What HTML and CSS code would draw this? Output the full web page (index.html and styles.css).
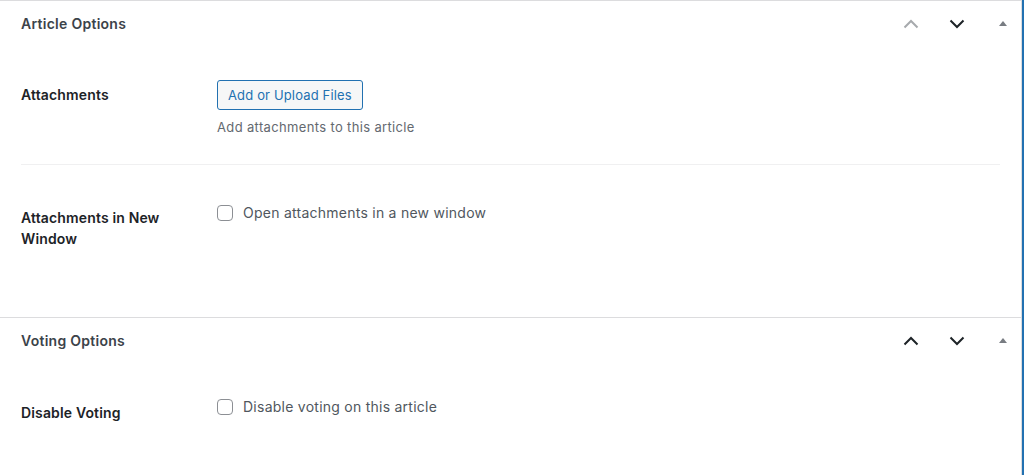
FILE: index.html
```html
<!DOCTYPE html>
<html>
<head>
<meta charset="utf-8">
<link rel="stylesheet" href="styles.css">
</head>
<body>
<div class="page">
  <div class="panel">
    <section class="box">
      <div class="box-header">
        <h2 class="box-title">Article Options</h2>
        <div class="box-actions">
          <button class="icon-btn is-disabled" aria-label="Move up">
            <svg width="16" height="10" viewBox="0 0 16 10"><path d="M1.5 8.5 L8 2 L14.5 8.5" fill="none" stroke="currentColor" stroke-width="2"/></svg>
          </button>
          <button class="icon-btn" aria-label="Move down">
            <svg width="16" height="10" viewBox="0 0 16 10"><path d="M1.5 1.5 L8 8 L14.5 1.5" fill="none" stroke="currentColor" stroke-width="2"/></svg>
          </button>
          <button class="icon-btn toggle" aria-label="Toggle panel">
            <svg width="8" height="5" viewBox="0 0 8 5"><polygon points="0,5 4,0 8,5" fill="currentColor"/></svg>
          </button>
        </div>
      </div>
      <div class="box-body">
        <div class="row row-first">
          <div class="row-label">Attachments</div>
          <div class="row-field">
            <button class="btn-secondary">Add or Upload Files</button>
            <p class="description">Add attachments to this article</p>
          </div>
        </div>
        <div class="row row-second">
          <div class="row-label">Attachments in New Window</div>
          <div class="row-field">
            <label class="check"><span class="checkbox"></span>Open attachments in a new window</label>
          </div>
        </div>
      </div>
    </section>
    <section class="box">
      <div class="box-header">
        <h2 class="box-title">Voting Options</h2>
        <div class="box-actions">
          <button class="icon-btn" aria-label="Move up">
            <svg width="16" height="10" viewBox="0 0 16 10"><path d="M1.5 8.5 L8 2 L14.5 8.5" fill="none" stroke="currentColor" stroke-width="2"/></svg>
          </button>
          <button class="icon-btn" aria-label="Move down">
            <svg width="16" height="10" viewBox="0 0 16 10"><path d="M1.5 1.5 L8 8 L14.5 1.5" fill="none" stroke="currentColor" stroke-width="2"/></svg>
          </button>
          <button class="icon-btn toggle" aria-label="Toggle panel">
            <svg width="8" height="5" viewBox="0 0 8 5"><polygon points="0,5 4,0 8,5" fill="currentColor"/></svg>
          </button>
        </div>
      </div>
      <div class="box-body">
        <div class="row">
          <div class="row-label">Disable Voting</div>
          <div class="row-field">
            <label class="check"><span class="checkbox"></span>Disable voting on this article</label>
          </div>
        </div>
      </div>
    </section>
  </div>
  <div class="edge"></div>
</div>
</body>
</html>
```

FILE: styles.css
```css
* { box-sizing: border-box; }
html, body { margin: 0; padding: 0; height: 100%; }
body {
  font-family: Inter, "Open Sans", "Liberation Sans", sans-serif;
  background: #fff;
  color: #1d2327;
  overflow: hidden;
}
.page {
  display: flex;
  height: 475px;
}
.panel {
  flex: 1;
  border-right: 1px solid #dcdcde;
  background: #fff;
}
.edge {
  width: 2px;
  background: #2271b1;
}
.box {
  border-top: 1px solid #dcdcde;
}
.box-header {
  height: 45px;
  display: flex;
  align-items: center;
  justify-content: space-between;
  padding-left: 21px;
}
.box-title {
  margin: 0;
  font-size: 14px;
  font-weight: 600;
  color: #3c434a;
  line-height: 20px;
  letter-spacing: 0.27px;
}
.box-actions {
  display: flex;
  gap: 10px;
  height: 100%;
}
.icon-btn {
  width: 36px;
  height: 100%;
  padding: 0;
  border: 0;
  background: transparent;
  color: #1d2327;
  display: flex;
  align-items: center;
  justify-content: center;
}
.icon-btn.is-disabled { color: #a7aaad; }
.icon-btn.toggle { color: #787c82; }
.box-body {
  padding: 0 21px;
}
.row {
  display: grid;
  grid-template-columns: 196px 1fr;
}
.row-label {
  padding: 39px 24px 0 0;
  font-size: 14px;
  font-weight: 600;
  line-height: 21px;
  color: #1d2327;
  letter-spacing: 0.15px;
}
.row-first .row-label {
  padding-top: 38px;
}
.row-field {
  padding-top: 34px;
  font-size: 14px;
  line-height: 20px;
}
.row-first {
  border-bottom: 1px solid #f0f0f1;
  padding-bottom: 27px;
}
.row-second .row-label {
  padding-top: 42px;
  padding-bottom: 68px;
}
.row-second .row-field {
  padding-top: 38px;
}
.btn-secondary {
  display: block;
  height: 30px;
  padding: 0 10px;
  border: 1px solid #2271b1;
  border-radius: 3px;
  background: #f6f7f7;
  color: #2271b1;
  font-family: inherit;
  font-size: 13px;
  line-height: 28px;
  letter-spacing: 0.15px;
}
.description {
  margin: 7px 0 0;
  font-size: 13px;
  line-height: 20px;
  color: #646970;
  letter-spacing: 0.35px;
}
.check {
  display: flex;
  align-items: center;
  gap: 10px;
  color: #50575e;
  font-size: 14px;
  line-height: 20px;
  letter-spacing: 0.25px;
}
.checkbox {
  width: 16px;
  height: 16px;
  border: 1px solid #8c8f94;
  border-radius: 4px;
  background: #fff;
}
```
